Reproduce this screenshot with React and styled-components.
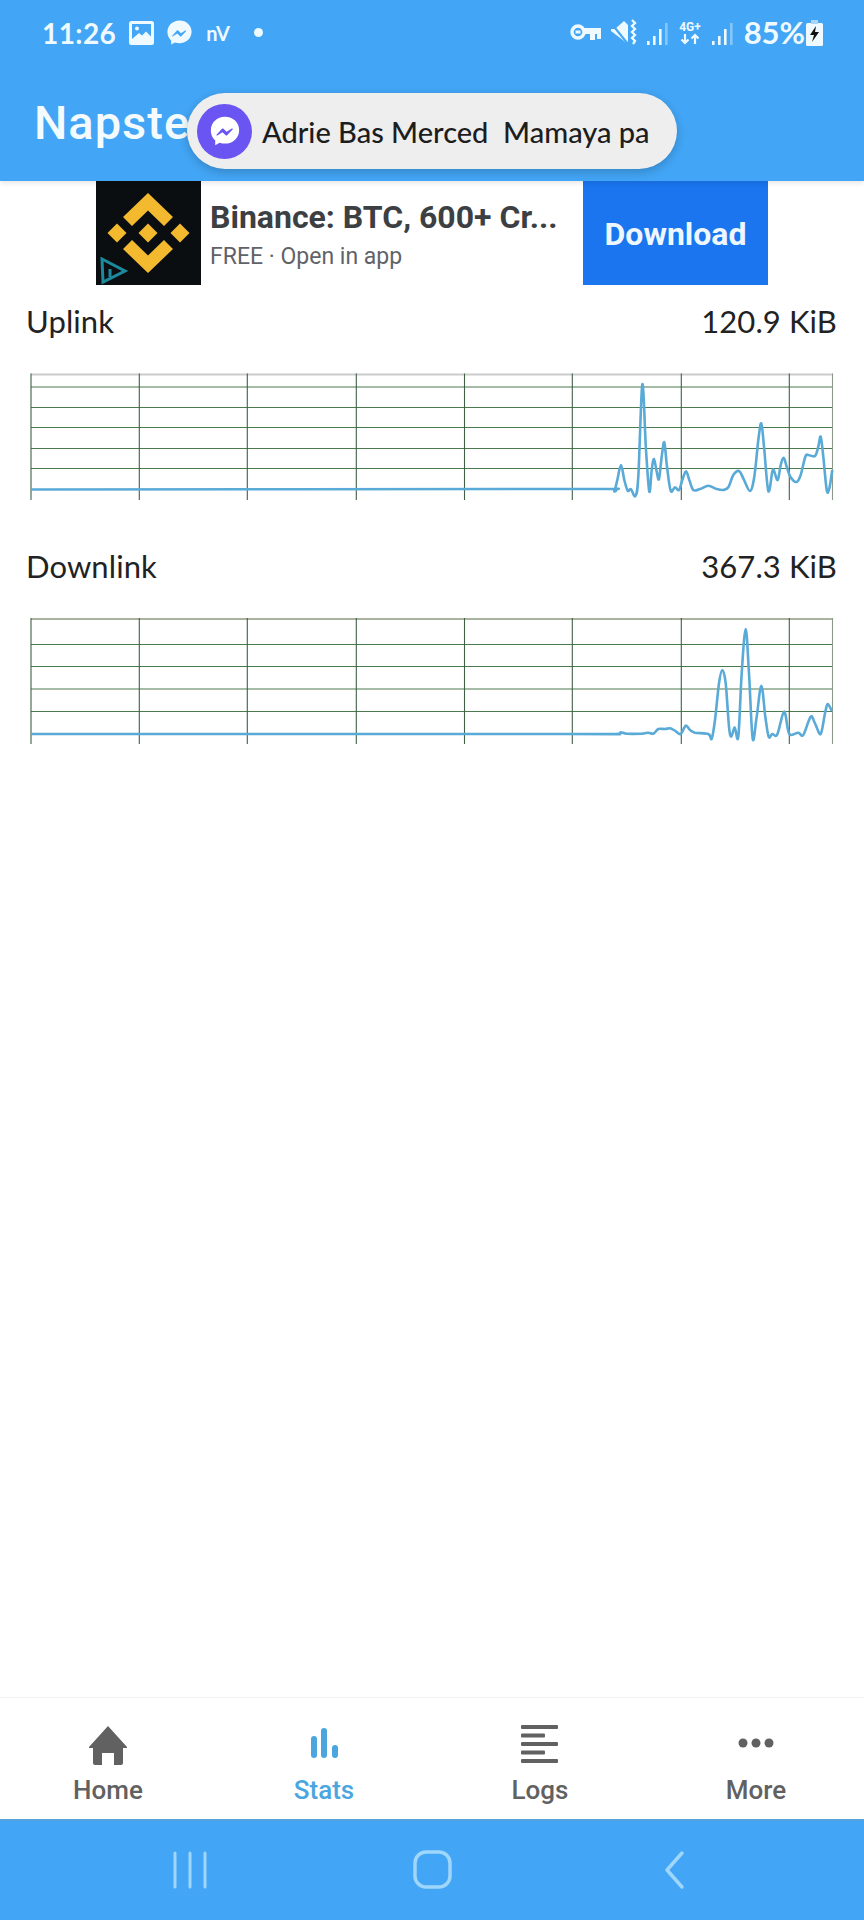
import React from "react";
import styled, { createGlobalStyle } from "styled-components";

const Global = createGlobalStyle`
  html, body { margin: 0; padding: 0; background: #fff; }
  * { box-sizing: border-box; }
`;

const HAND = `"Lato", "Noto Sans", sans-serif`;
const ROBOTO = `Roboto, "Liberation Sans", sans-serif`;
const BLUE = "#42a5f5";

const Page = styled.div`
  width: 864px; height: 1920px; display: flex; flex-direction: column;
  background: #fff; overflow: hidden; position: relative;
`;
const Header = styled.header`
  height: 181px; background: ${BLUE}; position: relative; flex: none;
  box-shadow: 0 2px 5px rgba(0,0,0,.1); z-index: 2;
`;
const StatusBar = styled.div`
  height: 66px; display: flex; align-items: center; justify-content: space-between;
  padding: 0 41px 1px 42px; color: #eefaff; font-family: ${HAND};
`;
const StatusGroup = styled.div`
  display: flex; align-items: center; gap: ${p => p.$gap || 11}px;
`;
const Clock = styled.span`
  font-size: 28px; font-weight: 700; letter-spacing: .4px; line-height: 1;
`;
const Small = styled.span`
  font-size: 20px; font-weight: 700; margin-left: 1px; line-height: 1;
`;
const Dot = styled.span`
  width: 9px; height: 9px; border-radius: 50%; background: #eefaff; margin-left: 13px;
`;
const Percent = styled.span`
  font-size: 31px; font-weight: 700; line-height: 1; margin-left: 1px; margin-right: -8px;
`;
const Title = styled.h1`
  margin: 0; padding: 27px 0 0 34px; font: 500 47px/60px ${ROBOTO}; letter-spacing: 1px; color: #f4fbff;
`;
const Pill = styled.div`
  position: absolute; left: 187px; top: 93px; width: 490px; height: 76px;
  background: #eeeeee; border-radius: 38px; display: flex; align-items: center;
  padding-left: 10px; gap: 10px; box-shadow: 0 3px 10px rgba(0,0,0,.2);
  font: 500 29px/1 ${HAND}; color: #1d1d1d; white-space: pre;
`;
const MsgCircle = styled.div`
  width: 55px; height: 55px; border-radius: 50%; background: #6a55f3;
  display: flex; align-items: center; justify-content: center;
`;

const Ad = styled.div`
  height: 104px; display: flex; justify-content: center; flex: none;
`;
const AdIcon = styled.div`
  width: 105px; height: 104px; background: #0b0e11; position: relative; flex: none;
`;
const Badge = styled.svg`
  position: absolute; left: 3px; bottom: 0;
`;
const AdText = styled.div`
  width: 382px; padding: 18px 0 0 9px; display: flex; flex-direction: column; gap: 8px;
`;
const AdTitle = styled.div`
  font: 700 32px/36px ${ROBOTO}; color: #3c4043; white-space: nowrap;
`;
const AdSub = styled.div`
  font: 400 23px/28px ${ROBOTO}; color: #5f6368; white-space: nowrap;
`;
const Download = styled.div`
  width: 185px; background: #1a75ee; color: #eef7ff; display: flex; align-items: center;
  justify-content: center; font: 700 32px/1 ${ROBOTO}; padding-top: 2px;
`;

const Main = styled.main`
  flex: 1; padding-top: 16px; display: flex; flex-direction: column;
`;
const StatBlock = styled.section`
  margin-top: ${p => p.$top}px;
`;
const StatRow = styled.div`
  height: 40px; display: flex; align-items: center; justify-content: space-between;
  padding: 0 27px 0 26px; font: 400 31px/1 ${HAND}; letter-spacing: .1px; color: #222;
`;
const ChartSvg = styled.svg`
  display: block; margin: 29px 0 0 26px; width: 812px; height: 134px;
`;

const BottomNav = styled.nav`
  height: 122px; flex: none; display: grid; grid-template-columns: repeat(4, 1fr);
  border-top: 1px solid #f1f1f1; background: #fff;
`;
const NavItem = styled.div`
  display: flex; flex-direction: column; align-items: center; padding-top: 25px;
  color: ${p => (p.$active ? "#4ba6e0" : "#616161")};
  font: 500 26px/1 ${ROBOTO};
`;
const NavIcon = styled.svg`
  display: block; width: 44px; height: 44px; margin-bottom: 10px;
`;
const SystemBar = styled.div`
  height: 101px; flex: none; background: ${BLUE}; border-top: 2px solid #5aa2dc;
`;
const SystemIcons = styled.svg`
  display: block; width: 864px; height: 99px;
`;

/* Catmull-Rom through the traced points */
function smooth(pts) {
  let d = `M${pts[0][0]} ${pts[0][1]}`;
  for (let i = 0; i < pts.length - 1; i++) {
    const p0 = pts[i - 1] || pts[i], p1 = pts[i], p2 = pts[i + 1], p3 = pts[i + 2] || p2;
    const k = 1 / 6;
    d += `C${(p1[0] + (p2[0] - p0[0]) * k).toFixed(1)} ${(p1[1] + (p2[1] - p0[1]) * k).toFixed(1)} ${(p2[0] - (p3[0] - p1[0]) * k).toFixed(1)} ${(p2[1] - (p3[1] - p1[1]) * k).toFixed(1)} ${p2[0].toFixed(1)} ${p2[1].toFixed(1)}`;
  }
  return d;
}

const upRaw = [[0,597],[155,597],[163,603],[172,570],[183,525],[193,570],[203,602],[213,598],[226,618],[235,560],[247,283],[258,480],[268,605],[275,540],[282,507],[290,545],[297,567],[305,500],[313,457],[321,530],[332,602],[345,592],[357,600],[367,570],[378,544],[388,570],[400,600],[420,597],[445,587],[470,597],[490,600],[505,592],[520,555],[537,543],[550,565],[570,603],[583,560],[595,450],[604,400],[612,470],[625,603],[637,545],[642,542],[653,570],[662,525],[671,503],[680,530],[692,562],[710,576],[722,555],[736,500],[745,495],[765,498],[775,470],[782,440],[790,500],[800,600],[808,595],[817,540]];
const downRaw = [[0,582],[165,582],[182,577],[200,581],[245,581],[265,578],[280,581],[295,567],[315,567],[330,565],[345,572],[362,582],[377,557],[390,570],[405,578],[445,582],[455,596],[465,540],[477,430],[487,390],[497,430],[507,560],[514,590],[524,562],[535,590],[545,400],[557,267],[567,400],[578,596],[590,530],[604,437],[616,530],[626,590],[637,582],[652,583],[672,515],[684,570],[692,585],[715,578],[730,585],[752,530],[765,550],[782,582],[795,520],[803,492],[815,512]];

const V_LINES = [31, 139.3, 247.3, 356.3, 464.5, 572.3, 681.3, 789.3, 832.5];

function Chart({ raw, base, top, lines, floor, tickEnd, originY, topColor }) {
  const pts = [[31, floor], ...raw.map(([x, y]) => [560 + x / 3, base + y / 3])];
  return (
    <ChartSvg viewBox={`26 ${originY} 812 134`}>
      <line x1="31" x2="833" y1={top} y2={top} stroke={topColor} strokeWidth="2" />
      {lines.map(y => <line key={y} x1="31" x2="833" y1={y} y2={y} stroke="#4a7a4e" strokeWidth="1.2" />)}
      {V_LINES.map((x, i) => (
        <line key={x} x1={x} x2={x} y1={top - 1} y2={tickEnd}
          stroke={i === V_LINES.length - 1 ? "#8b9a8b" : "#3f6044"} strokeWidth="1.1" />
      ))}
      <path d={smooth(pts)} fill="none" stroke="#5aaad8" strokeWidth="2.6" strokeLinejoin="round" />
    </ChartSvg>
  );
}

const MessengerGlyph = ({ size, bg, fg }) => (
  <svg width={size} height={size} viewBox="0 0 24 24">
    <path fill={bg} d="M12 2C6.4 2 2 6.1 2 11.6c0 2.9 1.2 5.4 3.1 7.1v3.3l3.1-1.7c1.2.4 2.5.6 3.8.6 5.6 0 10-4.1 10-9.500S17.6 2 12 2z" />
    <path fill={fg} d="M6 14.600l3.900-4.200c.3-.3.7-.3 1 0l2.300 2.200 3.600-2.300c.4-.2.900.3.600.6L13.500 15c-.3.3-.7.3-1 0l-2.300-2.200-3.600 2.400c-.4.2-.9-.3-.6-.6z" />
  </svg>
);

const Signal = ({ first = 3 }) => (
  <svg width="23" height="24" viewBox="0 0 23 24">
    {[[1,20,4],[7,15,9],[13,8,16],[19,2,22]].map(([x, y, h], i) => (
      <rect key={x} x={x} y={y} width="2.6" height={h} fill="#eefaff" opacity={i < first ? 1 : .4} />
    ))}
  </svg>
);

export default function App() {
  return (
    <Page>
      <Global />
      <Header>
        <StatusBar>
          <StatusGroup>
            <Clock>11:26</Clock>
            <svg width="25" height="24" viewBox="0 0 25 24" style={{ marginLeft: 2 }}>
              <rect width="25" height="24" rx="2.5" fill="#eefaff" />
              <rect x="3" y="3" width="19" height="15" fill={BLUE} />
              <circle cx="8" cy="7.5" r="2" fill="#eefaff" />
              <path d="M3 18l7-6 3 2.500 4-4 5 5V18z" fill="#eefaff" />
            </svg>
            <MessengerGlyph size={29} bg="#eefaff" fg={BLUE} />
            <Small>nV</Small>
            <Dot />
          </StatusGroup>
          <StatusGroup $gap={9}>
            <svg width="31" height="19" viewBox="0 0 31 19">
              <circle cx="8" cy="9" r="6" fill="none" stroke="#eefaff" strokeWidth="3.400" />
              <rect x="5.500" y="7.500" width="5" height="3" fill="#eefaff" />
              <path d="M14 5h17v11h-4v-5h-2v6h-5v-6h-6z" fill="#eefaff" />
            </svg>
            <svg width="27" height="27" viewBox="0 0 27 27">
              <path d="M1 10h4l9-8 4 4v19L1 12z" fill="#eefaff" />
              <path d="M1 4l17 21" stroke={BLUE} strokeWidth="2" />
              <path d="M22 1l3 3-3 3 3 3-3 3 3 3-3 3 3 3-2 3" fill="none" stroke="#eefaff" strokeWidth="2.300" />
            </svg>
            <Signal />
            <svg width="24" height="26" viewBox="0 0 24 26">
              <text x="12" y="11" textAnchor="middle" fontFamily={ROBOTO} fontWeight="700" fontSize="12" fill="#eefaff">4G+</text>
              <path d="M7 14v9M3.500 19.500L7 23l3.500-3.500M17 24v-9M13.500 18.500L17 15l3.500 3.500" fill="none" stroke="#eefaff" strokeWidth="2.200" />
            </svg>
            <Signal />
            <Percent>85%</Percent>
            <svg width="17" height="26" viewBox="0 0 17 26">
              <rect y="3" width="17" height="23" rx="1.500" fill="#eefaff" />
              <rect x="5" width="7" height="4" fill="#a9d6f8" />
              <path d="M10 6L4 15h4l-2 7 7-10H9z" fill="#111" />
            </svg>
          </StatusGroup>
        </StatusBar>
        <Title>Napster</Title>
        <Pill>
          <MsgCircle><MessengerGlyph size={34} bg="#fff" fg="#6a55f3" /></MsgCircle>
          <span>Adrie Bas Merced  Mamaya pa</span>
        </Pill>
      </Header>

      <Ad>
        <AdIcon>
          <svg width="105" height="104" viewBox="0 0 105 104">
            <g fill="#f3ba2f">
              <path d="M52 12l25 24-9 9-16-15.500L36 45l-9-9z" />
              <path d="M52 92L27 68l9-9 16 15.500L68 59l9 9z" />
              <path d="M52 42.500l9.500 9.500-9.500 9.500-9.500-9.500z" />
              <path d="M21 42.500l9.500 9.500-9.500 9.500-9.500-9.500z" />
              <path d="M84 42.500l9.500 9.500-9.500 9.500-9.500-9.500z" />
            </g>
          </svg>
          <Badge width="30" height="28" viewBox="0 0 30 28">
            <path d="M3 2l23 12L4 25z" fill="none" stroke="#1c8a9c" strokeWidth="3" />
            <path d="M11 12v8" stroke="#1c8a9c" strokeWidth="3" />
          </Badge>
        </AdIcon>
        <AdText>
          <AdTitle>Binance: BTC, 600+ Cr...</AdTitle>
          <AdSub>FREE · Open in app</AdSub>
        </AdText>
        <Download>Download</Download>
      </Ad>

      <Main>
        <StatBlock $top={0}>
          <StatRow><span>Uplink</span><span>120.9 KiB</span></StatRow>
          <Chart raw={upRaw} base={290} originY={370} top={374.500} lines={[387, 407.500, 427.500, 448.500, 468.500]} floor={489.500} tickEnd={500} topColor="#cccccc" />
        </StatBlock>
        <StatBlock $top={42}>
          <StatRow><span>Downlink</span><span>367.3 KiB</span></StatRow>
          <Chart raw={downRaw} base={540} originY={615} top={619} lines={[644.500, 666.500, 689, 711.500]} floor={734} tickEnd={744} topColor="#aab3a0" />
        </StatBlock>
      </Main>

      <BottomNav>
        <NavItem>
          <NavIcon viewBox="0 0 44 44">
            <path d="M22 3L41 24v1h-4v15a2 2 0 0 1-2 2h-7V30h-12v12H9a2 2 0 0 1-2-2V25H3v-1z" fill="#616161" />
          </NavIcon>
          Home
        </NavItem>
        <NavItem $active>
          <NavIcon viewBox="0 0 44 44">
            <g fill="#4ba6e0">
              <rect x="9" y="13" width="6" height="22" rx="3" />
              <rect x="19" y="5" width="6" height="30" rx="3" />
              <rect x="30" y="22" width="6" height="13" rx="3" />
            </g>
          </NavIcon>
          Stats
        </NavItem>
        <NavItem>
          <NavIcon viewBox="0 0 44 44">
            <g fill="#616161">
              <rect x="3" y="2" width="37" height="4" rx="1" />
              <rect x="3" y="10.500" width="24" height="4" rx="1" />
              <rect x="3" y="19" width="37" height="4" rx="1" />
              <rect x="3" y="27.500" width="24" height="4" rx="1" />
              <rect x="3" y="36" width="37" height="4" rx="1" />
            </g>
          </NavIcon>
          Logs
        </NavItem>
        <NavItem>
          <NavIcon viewBox="0 0 44 44">
            <g fill="#616161">
              <circle cx="9" cy="20" r="4.500" />
              <circle cx="22" cy="20" r="4.500" />
              <circle cx="35" cy="20" r="4.500" />
            </g>
          </NavIcon>
          More
        </NavItem>
      </BottomNav>

      <SystemBar>
        <SystemIcons viewBox="0 0 864 99">
          <g fill="none" stroke="#9fd6fb" strokeWidth="3" strokeLinecap="round" strokeLinejoin="round">
            <path d="M175 32v34M190 32v34M205 32v34" />
            <rect x="415" y="31" width="35" height="35" rx="11" strokeWidth="3.500" />
            <path d="M682 32l-15 17 15 17" strokeWidth="3.500" />
          </g>
        </SystemIcons>
      </SystemBar>
    </Page>
  );
}
